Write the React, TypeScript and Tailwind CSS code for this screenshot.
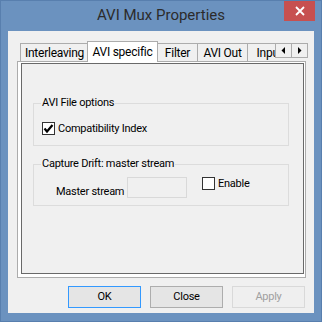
import React from 'react';

const font = { fontFamily: 'Roboto, "Open Sans", sans-serif' };

const Tab = ({ label, w, active }: { label: string; w: string; active?: boolean }) => (
  <div
    className={
      active
        ? `${w} h-[21px] -mb-[1px] relative z-10 bg-white border border-[#acacac] border-b-0 flex items-start justify-center pt-[1px] text-[12px] shrink-0`
        : `${w} h-[18px] bg-[#f0f0f0] border border-[#acacac] border-b-0 -ml-[1px] flex items-center justify-center pt-[1px] text-[12px] shrink-0`
    }
  >
    {label}
  </div>
);

const CheckBox = ({ checked }: { checked?: boolean }) => (
  <div className="w-[13px] h-[13px] border border-[#333333] bg-white flex items-center justify-center shrink-0">
    {checked && (
      <svg width="11" height="11" viewBox="0 0 11 11">
        <path d="M1.5 5.5 L4 8.5 L9.5 2" stroke="#000" strokeWidth="2.2" fill="none" />
      </svg>
    )}
  </div>
);

const Arrow = ({ dir }: { dir: 'l' | 'r' }) => (
  <div className={`w-[17px] h-[15px] bg-[#f0f0f0] border border-[#acacac] flex items-center justify-center ${dir === 'r' ? '-ml-[1px]' : ''}`}>
    <svg width="5" height="7" viewBox="0 0 5 7">
      {dir === 'l' ? <path d="M4 0 L0.5 3.5 L4 7 Z" fill="#000" /> : <path d="M1 0 L4.5 3.5 L1 7 Z" fill="#000" />}
    </svg>
  </div>
);

export default function App() {
  return (
    <div className="w-[322px] h-[322px] bg-[#6b92bf] border border-[#587fae] flex flex-col" style={font}>
      {/* Title bar */}
      <div className="h-[30px] relative flex items-center justify-center shrink-0">
        <span className="text-[15px] text-[#2b2b2b] -mt-[1px]">AVI Mux Properties</span>
        <div className="absolute right-[6px] top-0 w-[31px] h-[20px] bg-[#c75050] flex items-center justify-center">
          <svg width="10" height="10" viewBox="0 0 10 10">
            <path d="M1 1 L9 9 M9 1 L1 9" stroke="#fff" strokeWidth="1.8" />
          </svg>
        </div>
      </div>

      {/* Client area */}
      <div className="mx-[7px] h-[282px] bg-[#f0f0f0] flex flex-col text-[11px] tracking-[-0.25px] text-black">
        {/* Tabs */}
        <div className="relative mt-[10px] ml-[11px] w-[287px] h-[20px] flex items-end">
          <div className="w-[256px] h-[21px] -mb-[1px] overflow-hidden flex items-start">
            <div className="flex items-end h-[20px]">
              <Tab label="Interleaving" w="w-[69px] ml-[1px]" />
              <div className="self-start">
                <Tab label="AVI specific" w="w-[71px] -ml-[2px]" active />
              </div>
              <Tab label="Filter" w="w-[41px]" />
              <Tab label="AVI Out" w="w-[51px]" />
              <Tab label="Input" w="w-[45px]" />
            </div>
          </div>
          <div className="absolute left-[256px] top-[2px] flex">
            <Arrow dir="l" />
            <Arrow dir="r" />
          </div>
        </div>

        {/* Panel */}
        <div className="ml-[9px] w-[289px] h-[217px] border border-[#acacac] bg-white pl-[3px] pt-[1px] pr-[1px] pb-[3px]">
          <div className="w-full h-full border border-[#696969] bg-[#f0f0f0] flex flex-col px-[11px] pt-[39px]">
            {/* Group 1 */}
            <div className="relative w-[256px] h-[43px] border border-[#dcdcdc]">
              <span className="absolute -top-[10px] left-[7px] px-[1px] bg-[#f0f0f0] leading-[18px]">AVI File options</span>
              <div className="flex items-center gap-[3px] mt-[18px] ml-[8px] h-[13px]">
                <CheckBox checked />
                <span className="leading-[16px]">Compatibility Index</span>
              </div>
            </div>

            {/* Group 2 */}
            <div className="relative mt-[18px] w-[256px] h-[42px] border border-[#dcdcdc]">
              <span className="absolute -top-[10px] left-[7px] px-[1px] bg-[#f0f0f0] leading-[18px]">Capture Drift: master stream</span>
              <div className="flex items-start mt-[12px] ml-[22px]">
                <span className="w-[65px] leading-[16px] mt-[7px] whitespace-nowrap">Master stream</span>
                <div className="ml-[6px] w-[60px] h-[21px] border border-[#d9d9d9] bg-[#f0f0f0]" />
                <div className="ml-[15px] flex items-center gap-[3px] h-[13px]">
                  <CheckBox />
                  <span className="leading-[16px]">Enable</span>
                </div>
              </div>
            </div>
          </div>
        </div>

        {/* Buttons */}
        <div className="mt-[8px] mr-[9px] flex justify-end gap-[9px]">
          <div className="w-[73px] h-[22px] border border-[#3399ff] bg-[#e5e5e5] flex items-center justify-center">OK</div>
          <div className="w-[73px] h-[22px] border border-[#adadad] bg-[#e5e5e5] flex items-center justify-center">Close</div>
          <div className="w-[73px] h-[22px] border border-[#d9d9d9] bg-[#efefef] flex items-center justify-center text-[#a0a0a0]">Apply</div>
        </div>
      </div>
    </div>
  );
}
